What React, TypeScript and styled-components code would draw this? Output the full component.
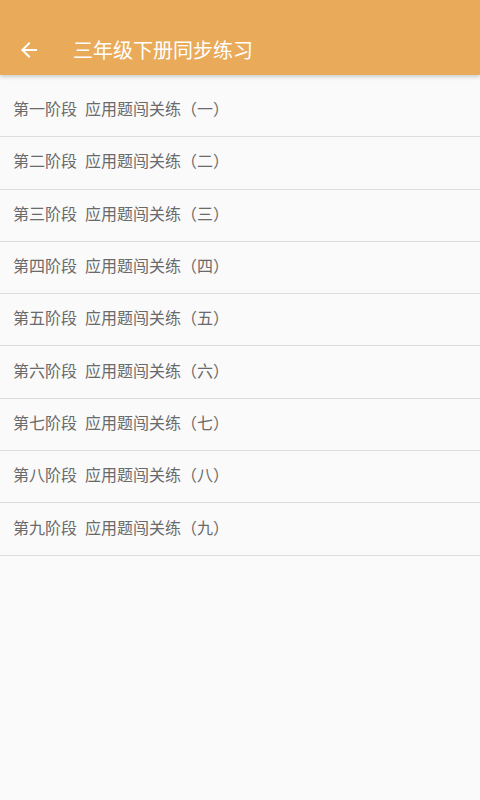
import React from "react";
import styled, { createGlobalStyle } from "styled-components";

const Global = createGlobalStyle`
  html, body { margin: 0; padding: 0; background: #fafafa; }
  body { font-family: "Noto Sans CJK SC", "Noto Sans", sans-serif; }
`;

const Page = styled.div`
  width: 480px;
  height: 800px;
  background: #fafafa;
  display: flex;
  flex-direction: column;
  overflow: hidden;
`;

const Toolbar = styled.header`
  height: 75px;
  flex: none;
  background: #e9ab5a;
  display: flex;
  align-items: center;
  padding-top: 24px;
  box-sizing: border-box;
  box-shadow: 0 2px 4px rgba(0, 0, 0, 0.18);
  position: relative;
  z-index: 1;
`;

const BackButton = styled.div`
  width: 24px;
  height: 24px;
  margin-left: 17px;
  display: flex;
  color: #fff;
`;

const Title = styled.h1`
  margin: 0 0 0 32px;
  font-size: 20px;
  font-weight: 400;
  color: #fff;
  line-height: 1;
`;

const List = styled.ul`
  list-style: none;
  margin: 0;
  padding: 10px 0 0;
`;

const Row = styled.li`
  height: 52.3px;
  box-sizing: border-box;
  border-bottom: 1.5px solid #dedede;
  display: flex;
  align-items: center;
  padding-left: 13px;
  padding-bottom: 5px;
  font-size: 16px;
  color: #6a6a6a;
`;

const Stage = styled.span`
  margin-right: 8px;
`;

const nums = ["一", "二", "三", "四", "五", "六", "七", "八", "九"];

export default function App() {
  return (
    <Page>
      <Global />
      <Toolbar>
        <BackButton>
          <svg width="24" height="24" viewBox="0 0 24 24" fill="currentColor">
            <path d="M20 11H7.83l5.59-5.59L12 4l-8 8 8 8 1.41-1.41L7.83 13H20v-2z" />
          </svg>
        </BackButton>
        <Title>三年级下册同步练习</Title>
      </Toolbar>
      <List>
        {nums.map((n) => (
          <Row key={n}>
            <Stage>第{n}阶段</Stage>
            <span>应用题闯关练（{n}）</span>
          </Row>
        ))}
      </List>
    </Page>
  );
}
